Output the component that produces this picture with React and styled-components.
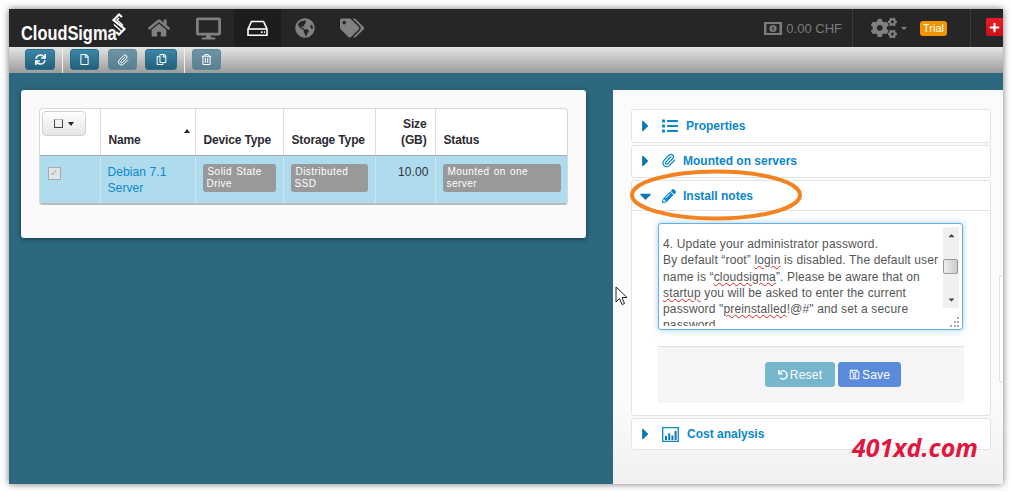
import React from 'react';
import styled, { createGlobalStyle } from 'styled-components';
import {
  FaHome, FaDesktop, FaGlobeAmericas, FaTags, FaCogs, FaSync, FaRegFile, FaRegCopy,
  FaRegTrashAlt, FaList, FaPencilAlt, FaUndo, FaRegSave, FaCaretRight, FaCaretDown,
  FaCaretUp, FaPlus,
} from 'react-icons/fa';
import { Paperclip } from 'lucide-react';

const GlobalStyle = createGlobalStyle`
  html, body { margin: 0; padding: 0; background: #fff; }
  body { font-family: "Liberation Sans", Arial, sans-serif; width: 1011px; height: 491px; overflow: hidden; }
  * { box-sizing: border-box; }
`;

const Page = styled.div`
  position: relative;
  width: 1011px;
  height: 491px;
  padding: 9px 8px 7px 9px;
`;

const Win = styled.div`
  position: relative;
  height: 100%;
  display: flex;
  flex-direction: column;
  overflow: hidden;
  box-shadow: 0 0 7px rgba(0, 0, 0, 0.55);
`;

const Header = styled.header`
  height: 38px;
  flex: none;
  display: flex;
  align-items: stretch;
  background: #262626;
`;

const Logo = styled.div`
  width: 126px;
  padding: 13px 0 0 12px;
  position: relative;
`;

const LogoText = styled.span`
  display: inline-block;
  color: #fff;
  font: bold 21px/22px "Liberation Sans", sans-serif;
  transform-origin: left;
  transform: scaleX(0.78);
`;

const LogoMark = styled.svg`
  position: absolute;
  left: 103px;
  top: 4px;
`;

const NavTab = styled.div`
  width: ${({ $w }) => $w}px;
  display: flex;
  align-items: center;
  justify-content: center;
  color: ${({ $active }) => ($active ? '#fff' : '#808080')};
  background: ${({ $active }) => ($active ? '#1d1d1d' : 'transparent')};
`;

const Spacer = styled.div`
  flex: 1;
`;

const Balance = styled.div`
  display: flex;
  align-items: center;
  gap: 4px;
  padding-right: 10px;
  color: #7c7c7c;
  font-size: 13px;
`;

const RightCell = styled.div`
  display: flex;
  align-items: center;
  border-left: 1px solid #3a3a3a;
  width: ${({ $w }) => $w}px;
  padding-left: ${({ $pl }) => $pl}px;
  color: #808080;
`;

const Trial = styled.span`
  margin-left: 13px;
  width: 27px;
  height: 15px;
  border-radius: 3px;
  background: #f29400;
  color: #fff;
  font-size: 11px;
  line-height: 15px;
  text-align: center;
`;

const Flag = styled.span`
  width: 17px;
  height: 18px;
  margin-top: -2px;
  display: flex;
  align-items: center;
  justify-content: center;
  background: linear-gradient(#ee1c25, #c8101a);
  border-radius: 2px 0 0 2px;
  color: #fff;
  font-size: 11px;
`;

const Toolbar = styled.div`
  height: 26px;
  flex: none;
  display: flex;
  align-items: flex-start;
  padding-top: 2px;
  padding-left: 16px;
  background: linear-gradient(#e4e4e4, #9c9c9c);
`;

const ToolButton = styled.button`
  width: ${({ $w }) => $w}px;
  height: 21px;
  margin-right: ${({ $mr }) => $mr}px;
  padding: 0;
  display: flex;
  align-items: center;
  justify-content: center;
  color: #fff;
  font-size: 11px;
  border: 1px solid ${({ $off }) => ($off ? '#5f8798' : '#2a6b88')};
  border-radius: 3px;
  background: ${({ $off }) => ($off ? 'linear-gradient(#6d95a6, #577f90)' : 'linear-gradient(#3b86a6, #22607c)')};
`;

const ToolDivider = styled.span`
  width: 1px;
  height: 26px;
  margin: -2px 7px 0 0;
  background: #f0f0f0;
`;

const Content = styled.main`
  flex: 1;
  display: flex;
  align-items: stretch;
  min-height: 0;
  background: #2c6880;
`;

const LeftPane = styled.section`
  width: 604px;
  flex: none;
  padding: 17px 27px 0 12px;
`;

const Card = styled.div`
  height: 148px;
  padding: 18px;
  background: #fafafa;
  border-radius: 3px;
  box-shadow: 0 1px 5px rgba(0, 0, 0, 0.45);
`;

const TableFrame = styled.div`
  border: 1px solid #d8d8d8;
  border-bottom: 2px solid #bbb;
  border-radius: 4px;
  overflow: hidden;
  background: #fff;
`;

const Table = styled.table`
  width: 528px;
  height: 94px;
  table-layout: fixed;
  border-collapse: collapse;
  font-size: 12px;
`;

const Th = styled.th`
  position: relative;
  width: ${({ $w }) => $w}px;
  height: 46px;
  padding: 0 8px 7px;
  vertical-align: bottom;
  text-align: ${({ $right }) => ($right ? 'right' : 'left')};
  color: #2b2b33;
  font-weight: bold;
  line-height: 16px;
  letter-spacing: -0.15px;
  white-space: nowrap;
  border-right: 1px solid #ddd;
  border-bottom: 1px solid #aaa;
  &:last-child { border-right: 0; }
`;

const SortMark = styled.span`
  position: absolute;
  right: 5px;
  top: 20px;
  width: 0;
  height: 0;
  border: 3px solid transparent;
  border-top: 0;
  border-bottom: 4px solid #222;
`;

const SelectButton = styled.span`
  position: absolute;
  left: 2px;
  top: 2px;
  width: 44px;
  height: 25px;
  display: flex;
  align-items: center;
  justify-content: center;
  gap: 5px;
  border: 1px solid #d0d0d0;
  border-radius: 4px;
  background: linear-gradient(#fff, #e6e6e6);
`;

const BoxIcon = styled.span`
  width: 9px;
  height: 9px;
  border: 1px solid #444;
  border-top-color: #bbb;
  border-radius: 1px;
`;

const DownCaret = styled.span`
  width: 0;
  height: 0;
  margin-left: ${({ $ml }) => $ml || 0}px;
  border: ${({ $s }) => $s || 3.5}px solid transparent;
  border-bottom: 0;
  border-top: ${({ $s }) => ($s ? $s : 4)}px solid ${({ $c }) => $c || '#222'};
`;

const Row = styled.tr`
  background: #aedbee;
`;

const Td = styled.td`
  padding: 8px 7px 0;
  padding-right: ${({ $right }) => ($right ? 6 : 7)}px;
  vertical-align: top;
  font-size: 12px;
  line-height: 16px;
  letter-spacing: 0.1px;
  text-align: ${({ $right }) => ($right ? 'right' : 'left')};
  color: #333;
  border-right: 1px solid #cfe3ea;
  &:last-child { border-right: 0; }
`;

const NameLink = styled.a`
  color: #0d88cf;
  display: block;
`;

const FakeCheck = styled.span`
  display: flex;
  align-items: center;
  justify-content: center;
  width: 13px;
  height: 13px;
  margin: 3px 0 0 1px;
  border: 1px solid #aaa;
  background: #dfe6e9;
  color: #aaa;
  font-size: 10px;
`;

const Label = styled.span`
  display: block;
  padding: 2px 3px 2px 4px;
  border-radius: 3px;
  background: #999;
  color: #fff;
  font-size: 10px;
  line-height: 12px;
  letter-spacing: 0.45px;
  word-spacing: 1px;
  text-indent: 1px;
`;

const RightPane = styled.section`
  flex: 1;
  margin-top: 17px;
  padding: 19px 12px 0 18px;
  background: linear-gradient(#fbfbfb 80%, #f0f0f0);
`;

const AccItem = styled.div`
  margin-bottom: ${({ $mb }) => $mb}px;
  border: 1px solid #e3e3e3;
  border-radius: 3px;
  background: #fff;
`;

const AccHead = styled.div`
  height: ${({ $h }) => $h}px;
  display: flex;
  align-items: center;
  padding-left: 5px;
  padding-bottom: ${({ $pb }) => $pb || 0}px;
  color: #0b87cc;
  font-size: 12px;
  font-weight: bold;
  border-bottom: ${({ $open }) => ($open ? '1px solid #e3e3e3' : '0')};
`;

const AccCaret = styled.span`
  width: 17px;
  display: flex;
  color: #0b76b0;
  font-size: 18px;
  margin-right: ${({ $mr }) => $mr}px;
`;

const AccIcon = styled.span`
  display: flex;
  margin-right: ${({ $mr }) => $mr}px;
  font-size: ${({ $size }) => $size}px;
`;

const AccBody = styled.div`
  height: 204px;
  padding: 12px 26px 0;
`;

const NotesBox = styled.div`
  position: relative;
  width: 305px;
  height: 107px;
  padding: 0 20px 0 4px;
  border: 1px solid #66afe9;
  border-radius: 3px;
  background: #fff;
  box-shadow: 0 0 6px rgba(102, 175, 233, 0.6);
`;

const NotesText = styled.div`
  height: 102px;
  padding-top: 12px;
  overflow: hidden;
  color: #555;
  font-size: 12px;
  line-height: 16.3px;
  letter-spacing: 0.15px;
`;

const Spell = styled.span`
  text-decoration: underline wavy #e02020 1px;
  text-underline-offset: 1px;
`;

const ScrollBar = styled.div`
  position: absolute;
  right: 3px;
  top: 3px;
  width: 16px;
  height: 81px;
  display: flex;
  flex-direction: column;
  align-items: center;
  justify-content: space-between;
  padding: 4px 0;
  background: #f0f0f0;
  color: #444;
  font-size: 9px;
`;

const Thumb = styled.span`
  position: absolute;
  top: 32px;
  left: 0;
  width: 15px;
  height: 15px;
  border: 1px solid #999;
  border-radius: 2px;
  background: linear-gradient(90deg, #eee, #ccc);
`;

const Grip = styled.svg`
  position: absolute;
  right: 2px;
  bottom: 2px;
`;

const FormActions = styled.div`
  width: 306px;
  height: 57px;
  margin-top: 16px;
  padding: 15px 0 0 107px;
  display: flex;
  gap: 3px;
  background: #f5f5f5;
  border-top: 1px solid #ddd;
`;

const ActionButton = styled.button`
  width: ${({ $w }) => $w}px;
  height: 25px;
  padding: 0;
  display: flex;
  align-items: center;
  justify-content: center;
  gap: 2px;
  color: #fff;
  font: 12px "Liberation Sans", sans-serif;
  letter-spacing: 0.2px;
  border: 1px solid ${({ $bg }) => $bg};
  border-radius: 3px;
  background: ${({ $bg }) => $bg};
`;

const SideEdge = styled.div`
  position: absolute;
  left: 990px;
  top: 266px;
  width: 8px;
  height: 108px;
  border: 1px solid #e6e0d6;
  border-right: 0;
  border-radius: 3px 0 0 3px;
  background: #fff;
`;

const Annotation = styled.svg`
  position: absolute;
  left: 625px;
  top: 165px;
`;

const Cursor = styled.svg`
  position: absolute;
  left: 615px;
  top: 286px;
`;

const Watermark = styled.div`
  position: absolute;
  left: 852px;
  top: 433px;
  color: #e0183f;
  font: italic bold 25px/28px "Open Sans", sans-serif;
`;

const DriveIcon = () => (
  <svg width="21" height="17" viewBox="0 0 21 17" fill="none" stroke="#fff" strokeWidth="1.6">
    <path d="M1 9 4.5 1.500h12L20 9v6.200H1Z" />
    <path d="M1 9h19" />
    <path d="M14 12.200h1.600M17 12.200h1" strokeWidth="1.800" />
  </svg>
);

const MoneyIcon = () => (
  <svg width="18" height="13" viewBox="0 0 18 13">
    <path fill="#7c7c7c" d="M0 0h18v13H0Z" />
    <path fill="#262626" d="M2.500 2h13v9h-13Z" />
    <circle cx="9" cy="6.500" r="3.600" fill="#7c7c7c" />
    <path fill="#262626" d="M8.400 4.500h1.200v4H8.400Z" />
  </svg>
);

const ChartIcon = () => (
  <svg width="17" height="15" viewBox="0 0 17 15" fill="none">
    <path d="M.7.7h15.600v13.600H.7Z" stroke="#0b87cc" strokeWidth="1.300" />
    <path d="M3 9h2v4H3ZM6.200 6.500h2V13h-2ZM9.400 8.500h2V13h-2ZM12.600 4h2v9h-2Z" fill="#0b76b0" />
  </svg>
);

const App = () => {
  return (
    <Page>
      <GlobalStyle />
      <Win>
        <Header>
          <Logo>
            <LogoText>CloudSigma</LogoText>
            <LogoMark width="14" height="23" viewBox="0 0 14 23" fill="none" stroke="#fff" strokeWidth="2.200">
              <path d="M10 4 7 1.500 1.500 7 12.500 16 7 21.500 4 19" />
              <path d="M7 5 5 7 11 12.500M9 18 7 16 2 11.500" strokeWidth="1.400" />
            </LogoMark>
          </Logo>
          <NavTab $w={47}><FaHome size={22} /></NavTab>
          <NavTab $w={52}><FaDesktop size={25} /></NavTab>
          <NavTab $w={47} $active><DriveIcon /></NavTab>
          <NavTab $w={47}><FaGlobeAmericas size={20} /></NavTab>
          <NavTab $w={47}><FaTags size={24} /></NavTab>
          <Spacer />
          <Balance><MoneyIcon /><span>0.00 CHF</span></Balance>
          <RightCell $w={118} $pl={18}>
            <FaCogs size={26} />
            <DownCaret $ml={4} $s={3} $c="#888" />
            <Trial>Trial</Trial>
          </RightCell>
          <RightCell $w={33} $pl={15}><Flag><FaPlus /></Flag></RightCell>
        </Header>
        <Toolbar>
          <ToolButton $w={30} $mr={7}><FaSync /></ToolButton>
          <ToolDivider />
          <ToolButton $w={29} $mr={9}><FaRegFile /></ToolButton>
          <ToolButton $w={29} $mr={8} $off><Paperclip size={12} /></ToolButton>
          <ToolButton $w={32} $mr={7}><FaRegCopy /></ToolButton>
          <ToolDivider />
          <ToolButton $w={29} $mr={0} $off><FaRegTrashAlt /></ToolButton>
        </Toolbar>
        <Content>
          <LeftPane>
            <Card>
              <TableFrame>
                <Table>
                  <thead>
                    <tr>
                      <Th $w={60}><SelectButton><BoxIcon /><DownCaret /></SelectButton></Th>
                      <Th $w={95}>Name<SortMark /></Th>
                      <Th $w={88}>Device Type</Th>
                      <Th $w={92}>Storage Type</Th>
                      <Th $w={60} $right>Size<br />(GB)</Th>
                      <Th>Status</Th>
                    </tr>
                  </thead>
                  <tbody>
                    <Row>
                      <Td><FakeCheck>✓</FakeCheck></Td>
                      <Td><NameLink>Debian 7.1 Server</NameLink></Td>
                      <Td><Label>Solid State Drive</Label></Td>
                      <Td><Label>Distributed SSD</Label></Td>
                      <Td $right>10.00</Td>
                      <Td><Label>Mounted on one server</Label></Td>
                    </Row>
                  </tbody>
                </Table>
              </TableFrame>
            </Card>
          </LeftPane>
          <RightPane>
            <AccItem $mb={2}>
              <AccHead $h={32}>
                <AccCaret $mr={8}><FaCaretRight /></AccCaret>
                <AccIcon $mr={8} $size={16}><FaList /></AccIcon>
                Properties
              </AccHead>
            </AccItem>
            <AccItem $mb={2}>
              <AccHead $h={31} $pb={2}>
                <AccCaret $mr={7}><FaCaretRight /></AccCaret>
                <AccIcon $mr={7} $size={15}><Paperclip size={15} /></AccIcon>
                Mounted on servers
              </AccHead>
            </AccItem>
            <AccItem $mb={2}>
              <AccHead $h={30} $open>
                <AccCaret $mr={8}><FaCaretDown /></AccCaret>
                <AccIcon $mr={7} $size={14}><FaPencilAlt /></AccIcon>
                Install notes
              </AccHead>
              <AccBody>
                <NotesBox>
                  <NotesText>
                    4. Update your administrator password.<br />
                    By default “root” <Spell>login</Spell> is disabled. The default user name is “<Spell>cloudsigma</Spell>”. Please be aware that on <Spell>startup</Spell> you will be asked to enter the current password "<Spell>preinstalled</Spell>!@#" and set a secure password.
                  </NotesText>
                  <ScrollBar>
                    <FaCaretUp />
                    <Thumb />
                    <FaCaretDown />
                  </ScrollBar>
                  <Grip width="10" height="10" viewBox="0 0 10 10" fill="#aaa">
                    <path d="M7 0h2v2H7ZM4 4h2v2H4ZM7 4h2v2H7ZM0 8h2v2H0ZM4 8h2v2H4ZM7 8h2v2H7Z" />
                  </Grip>
                </NotesBox>
                <FormActions>
                  <ActionButton $w={70} $bg="#76b6cc"><FaUndo size={10} />Reset</ActionButton>
                  <ActionButton $w={63} $bg="#5a8cdb"><FaRegSave size={11} />Save</ActionButton>
                </FormActions>
              </AccBody>
            </AccItem>
            <AccItem $mb={0}>
              <AccHead $h={30}>
                <AccCaret $mr={8}><FaCaretRight /></AccCaret>
                <AccIcon $mr={8} $size={17}><ChartIcon /></AccIcon>
                Cost analysis
              </AccHead>
            </AccItem>
          </RightPane>
          <SideEdge />
        </Content>
      </Win>
      <Annotation width="182" height="60" viewBox="0 0 182 60" fill="none">
        <ellipse cx="91" cy="30" rx="84" ry="23.500" stroke="#f58220" strokeWidth="4" />
      </Annotation>
      <Cursor width="13" height="20" viewBox="0 0 13 20">
        <path d="M1 1v15l3.500-3.500 2.500 6 2.500-1-2.500-6H12Z" fill="#fff" stroke="#222" />
      </Cursor>
      <Watermark>401xd.com</Watermark>
    </Page>
  );
};

export default App;
